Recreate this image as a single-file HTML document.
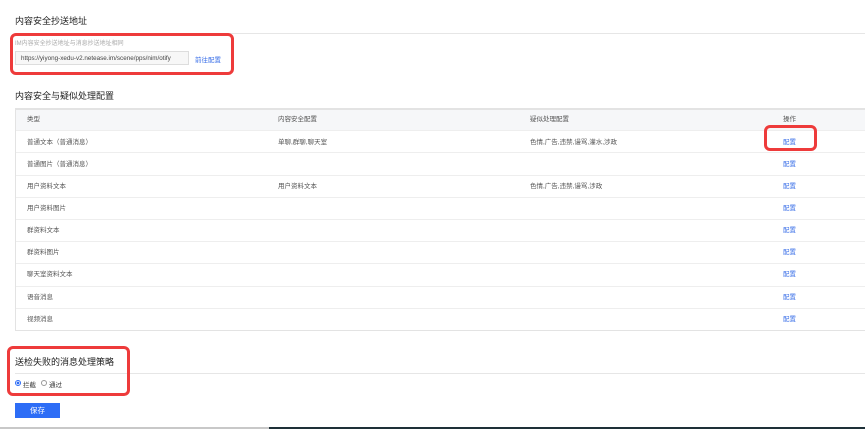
<!DOCTYPE html>
<html><head><meta charset="utf-8"><style>
*{margin:0;padding:0;box-sizing:border-box}
body{width:865px;height:429px;background:#fff;position:relative;overflow:hidden;font-family:"Liberation Sans","Noto Sans CJK SC",sans-serif;color:#333}
.a{position:absolute;white-space:nowrap}
.t{font-size:9px;color:#222}
.s{font-size:6.5px;color:#555}
.l{font-size:6.5px;color:#3a6fe8}
.line{position:absolute;height:1px;background:#e6e6e6}
.red{position:absolute;border:3px solid #ee3b3b;border-radius:6px}
.r .a{margin-top:-2px}
</style></head><body>
<div class="a t" style="left:15px;top:14px">内容安全抄送地址</div>
<div class="line" style="left:15px;top:33px;width:850px"></div>
<div class="a" style="left:15px;top:38px;font-size:6px;color:#aaa">IM内容安全抄送地址与消息抄送地址相同</div>
<div class="a" style="left:15px;top:51px;width:174px;height:14px;border:1px solid #ddd;background:#f7f7f7;font-size:6.3px;color:#444;padding:3px 5px">https://yiyong-xedu-v2.netease.im/scene/pps/nim/otify</div>
<div class="a l" style="left:195px;top:54px">前往配置</div>
<div class="red" style="left:10px;top:33px;width:224px;height:42px"></div>

<div class="a t" style="left:15px;top:89px">内容安全与疑似处理配置</div>
<div class="a" style="left:15px;top:108px;width:860px;height:223px;border:1px solid #e3e3e3;border-top:2px solid #e3e3e3"></div>
<div class="a" style="left:16px;top:110px;width:849px;height:20px;background:#f6f7f9"></div>
<div class="r">
<div class="a s" style="left:27px;top:115px">类型</div>
<div class="a s" style="left:278px;top:115px">内容安全配置</div>
<div class="a s" style="left:530px;top:115px">疑似处理配置</div>
<div class="a s" style="left:783px;top:115px">操作</div>
<div class="a s" style="left:27px;top:138px">普通文本（普通消息）</div><div class="a s" style="left:278px;top:138px">单聊,群聊,聊天室</div><div class="a s" style="left:530px;top:138px">色情,广告,违禁,谩骂,灌水,涉政</div><div class="a l" style="left:783px;top:138px">配置</div>
<div class="a s" style="left:27px;top:160px">普通图片（普通消息）</div><div class="a l" style="left:783px;top:160px">配置</div>
<div class="a s" style="left:27px;top:182px">用户资料文本</div><div class="a s" style="left:278px;top:182px">用户资料文本</div><div class="a s" style="left:530px;top:182px">色情,广告,违禁,谩骂,涉政</div><div class="a l" style="left:783px;top:182px">配置</div>
<div class="a s" style="left:27px;top:204px">用户资料图片</div><div class="a l" style="left:783px;top:204px">配置</div>
<div class="a s" style="left:27px;top:226px">群资料文本</div><div class="a l" style="left:783px;top:226px">配置</div>
<div class="a s" style="left:27px;top:248px">群资料图片</div><div class="a l" style="left:783px;top:248px">配置</div>
<div class="a s" style="left:27px;top:270px">聊天室资料文本</div><div class="a l" style="left:783px;top:270px">配置</div>
<div class="a s" style="left:27px;top:293px">语音消息</div><div class="a l" style="left:783px;top:293px">配置</div>
<div class="a s" style="left:27px;top:315px">视频消息</div><div class="a l" style="left:783px;top:315px">配置</div>
</div>
<div class="line" style="left:16px;top:130px;width:849px;background:#eee"></div>
<div class="line" style="left:16px;top:152px;width:849px;background:#eee"></div>
<div class="line" style="left:16px;top:175px;width:849px;background:#eee"></div>
<div class="line" style="left:16px;top:197px;width:849px;background:#eee"></div>
<div class="line" style="left:16px;top:219px;width:849px;background:#eee"></div>
<div class="line" style="left:16px;top:241px;width:849px;background:#eee"></div>
<div class="line" style="left:16px;top:263px;width:849px;background:#eee"></div>
<div class="line" style="left:16px;top:286px;width:849px;background:#eee"></div>
<div class="line" style="left:16px;top:308px;width:849px;background:#eee"></div>
<div class="red" style="left:764px;top:125px;width:53px;height:26px"></div>

<div class="a t" style="left:15px;top:355px">送检失败的消息处理策略</div>
<div class="line" style="left:15px;top:373px;width:850px"></div>
<div class="a" style="left:15px;top:380px;width:6px;height:6px;border-radius:50%;border:1px solid #2d6df6;background:radial-gradient(#2d6df6 45%,#fff 50%)"></div>
<div class="a s" style="left:23px;top:379px;color:#333">拦截</div>
<div class="a" style="left:41px;top:380px;width:6px;height:6px;border-radius:50%;border:1px solid #999"></div>
<div class="a s" style="left:49px;top:379px;color:#333">通过</div>
<div class="red" style="left:7px;top:346px;width:123px;height:50px"></div>
<div class="a" style="left:15px;top:403px;width:45px;height:15px;background:#2d6df6;color:#fff;font-size:7.5px;text-align:center;line-height:15px">保存</div>
<div class="a" style="left:0;top:427px;width:269px;height:2px;background:#c8c8c8"></div>
<div class="a" style="left:269px;top:427px;width:596px;height:2px;background:#1e3038"></div>
</body></html>
